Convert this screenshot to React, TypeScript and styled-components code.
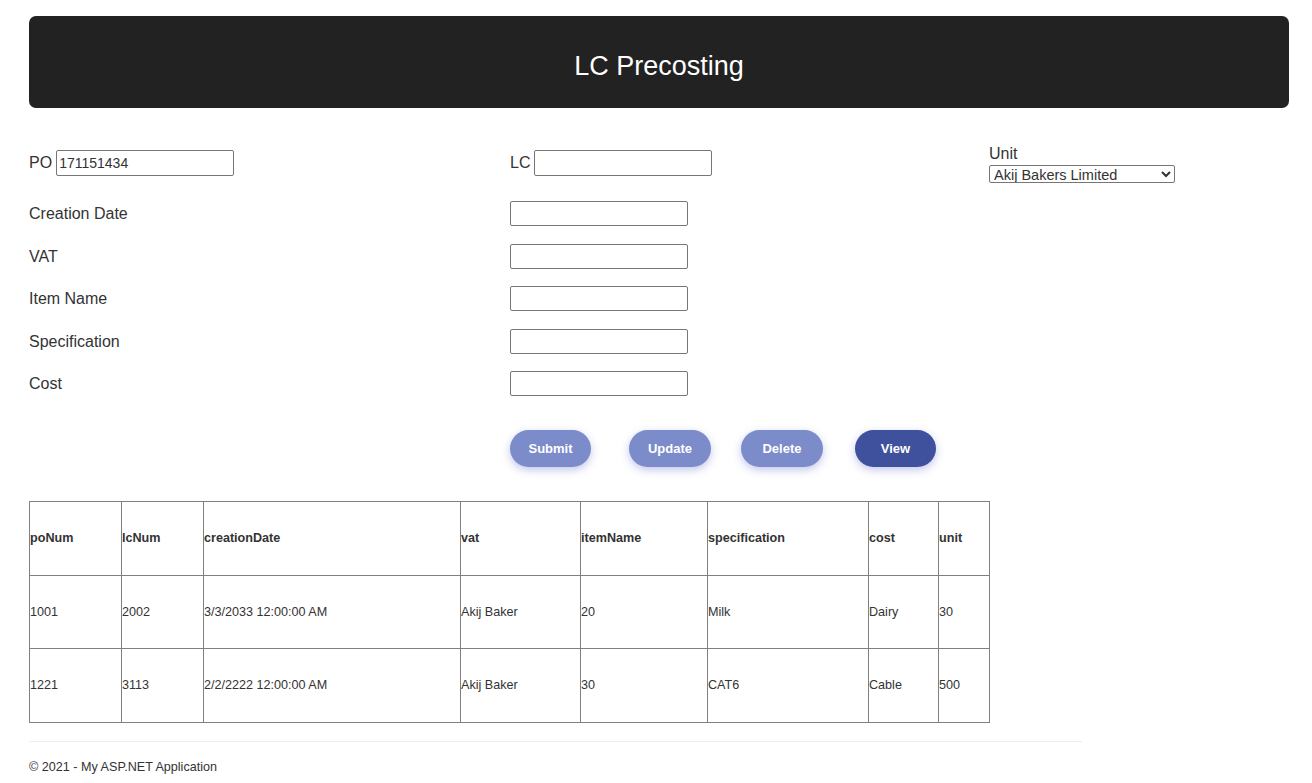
import styled, { createGlobalStyle } from "styled-components";

const GlobalStyle = createGlobalStyle`
  html, body {
    margin: 0;
    background: #fff;
  }
  body {
    font-family: "Liberation Sans", Arial, sans-serif;
    color: #333;
  }
`;

type Row = {
  poNum: string;
  lcNum: string;
  creationDate: string;
  vat: string;
  itemName: string;
  specification: string;
  cost: string;
  unit: string;
};

const rows: Row[] = [
  {
    poNum: "1001",
    lcNum: "2002",
    creationDate: "3/3/2033 12:00:00 AM",
    vat: "Akij Baker",
    itemName: "20",
    specification: "Milk",
    cost: "Dairy",
    unit: "30",
  },
  {
    poNum: "1221",
    lcNum: "3113",
    creationDate: "2/2/2222 12:00:00 AM",
    vat: "Akij Baker",
    itemName: "30",
    specification: "CAT6",
    cost: "Cable",
    unit: "500",
  },
];

const columns: { key: keyof Row; width: number }[] = [
  { key: "poNum", width: 92 },
  { key: "lcNum", width: 82 },
  { key: "creationDate", width: 257 },
  { key: "vat", width: 120 },
  { key: "itemName", width: 127 },
  { key: "specification", width: 161 },
  { key: "cost", width: 70 },
  { key: "unit", width: 51 },
];

const fields = ["Creation Date", "VAT", "Item Name", "Specification", "Cost"];

const buttons = [
  { label: "Submit", offset: 0, width: 81, primary: false },
  { label: "Update", offset: 38, width: 82, primary: false },
  { label: "Delete", offset: 30, width: 82, primary: false },
  { label: "View", offset: 32, width: 81, primary: true },
];

export default function App() {
  return (
    <>
      <GlobalStyle />
      <Page>
        <Banner>
          <Title>LC Precosting</Title>
        </Banner>

        <FormGrid>
          <InlineField>
            <Label>PO</Label>
            <TextInput $tall defaultValue="171151434" />
          </InlineField>
          <InlineField>
            <Label>LC</Label>
            <TextInput $tall />
          </InlineField>
          <UnitField>
            <UnitLabel>Unit</UnitLabel>
            <UnitSelect defaultValue="akij">
              <option value="akij">Akij Bakers Limited</option>
            </UnitSelect>
          </UnitField>

          {fields.map(name => (
            <FieldRow key={name}>
              <Label>{name}</Label>
              <TextInput />
            </FieldRow>
          ))}
        </FormGrid>

        <Actions>
          {buttons.map(b => (
            <ActionButton
              key={b.label}
              $offset={b.offset}
              $width={b.width}
              $primary={b.primary}>
              {b.label}
            </ActionButton>
          ))}
        </Actions>

        <DataTable>
          <colgroup>
            {columns.map(c => (
              <col key={c.key} style={{ width: c.width }} />
            ))}
          </colgroup>
          <thead>
            <tr>
              {columns.map(c => (
                <HeadCell key={c.key}>{c.key}</HeadCell>
              ))}
            </tr>
          </thead>
          <tbody>
            {rows.map(r => (
              <tr key={r.poNum}>
                {columns.map(c => (
                  <Cell key={c.key}>{r[c.key]}</Cell>
                ))}
              </tr>
            ))}
          </tbody>
        </DataTable>

        <Footer>
          <Rule />
          <Copy>© 2021 - My ASP.NET Application</Copy>
        </Footer>
      </Page>
    </>
  );
}

const Page = styled.div`
  padding: 16px 23px 0 29px;
`;

const Banner = styled.header`
  box-sizing: border-box;
  height: 92px;
  padding-top: 8px;
  background: #222;
  border-radius: 7px;
  display: flex;
  align-items: center;
  justify-content: center;
`;

const Title = styled.h1`
  margin: 0;
  font-size: 27px;
  font-weight: normal;
  color: #fff;
`;

const FormGrid = styled.div`
  margin-top: 42px;
  display: grid;
  grid-template-columns: 481px 479px 1fr;
  grid-template-rows: 51px repeat(5, 42.5px);
  align-items: start;
`;

const InlineField = styled.div`
  display: flex;
  align-items: center;
  gap: 4px;
  height: 26px;
`;

const FieldRow = styled.div`
  display: contents;

  & > input {
    grid-column: 2;
  }
  & > span {
    grid-column: 1;
    line-height: 25px;
  }
`;

const Label = styled.span`
  font-size: 16px;
  color: #333;
`;

const TextInput = styled.input<{ $tall?: boolean }>`
  box-sizing: border-box;
  width: 178px;
  height: ${({ $tall }) => ($tall ? "26px" : "25px")};
  margin: 0;
  padding: 1px 2px;
  border: 1px solid #767676;
  border-radius: 2px;
  font-family: "Liberation Sans", Arial, sans-serif;
  font-size: 14px;
  color: #333;
  background: #fff;
`;

const UnitField = styled.div`
  margin-top: -5px;
  display: flex;
  flex-direction: column;
  align-items: flex-start;
`;

const UnitLabel = styled.span`
  font-size: 16px;
  line-height: 18px;
  color: #333;
`;

const UnitSelect = styled.select`
  box-sizing: border-box;
  margin-top: 2px;
  width: 186px;
  height: 18px;
  padding: 0;
  border: 1px solid #767676;
  border-radius: 2px;
  font-family: "Liberation Sans", Arial, sans-serif;
  font-size: 14.5px;
  color: #333;
  background: #fff;
`;

const Actions = styled.div`
  margin-top: 16.5px;
  padding-left: 481px;
  display: flex;
  align-items: center;
`;

const ActionButton = styled.button<{
  $offset: number;
  $width: number;
  $primary: boolean;
}>`
  margin-left: ${({ $offset }) => $offset}px;
  width: ${({ $width }) => $width}px;
  height: 37px;
  border: none;
  border-radius: 19px;
  background: ${({ $primary }) => ($primary ? "#3f519d" : "#7c8bc9")};
  box-shadow: 0 3px 8px rgba(80, 95, 200, 0.35);
  color: #fff;
  font-family: "Liberation Sans", Arial, sans-serif;
  font-size: 13px;
  font-weight: bold;
  cursor: pointer;
`;

const DataTable = styled.table`
  margin-top: 34px;
  width: 960px;
  border-collapse: collapse;
  table-layout: fixed;
  border: 1px solid #808080;
`;

const HeadCell = styled.th`
  height: 72.6px;
  padding: 0;
  border: 1px solid #808080;
  text-align: left;
  font-size: 12.6px;
  font-weight: bold;
  color: #333;
`;

const Cell = styled.td`
  height: 72.6px;
  padding: 0;
  border: 1px solid #808080;
  font-size: 12.6px;
  color: #333;
`;

const Footer = styled.footer`
  width: 1053px;
  margin-top: 18px;
`;

const Rule = styled.hr`
  margin: 0;
  border: none;
  border-top: 1px solid #eee;
`;

const Copy = styled.p`
  margin: 17px 0 0;
  font-size: 12.6px;
  line-height: 17px;
  color: #333;
`;
